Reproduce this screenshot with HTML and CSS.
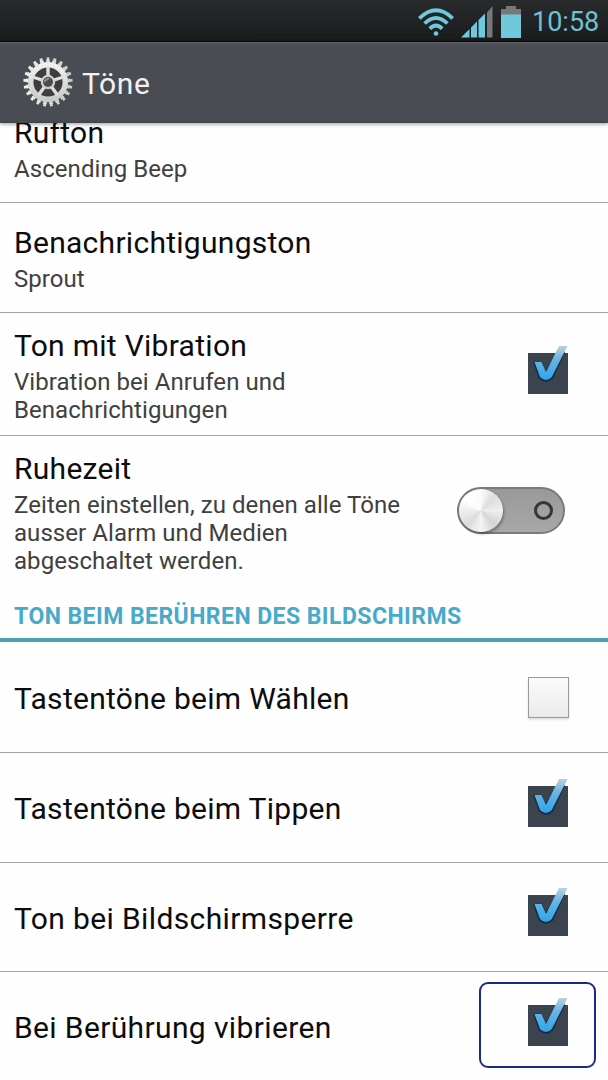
FILE: index.html
```html
<!DOCTYPE html>
<html lang="de">
<head>
<meta charset="utf-8">
<title>Töne</title>
<link rel="stylesheet" href="styles.css">
</head>
<body>
<svg class="defs" aria-hidden="true">
  <defs>
    <linearGradient id="tick" x1="0" y1="0" x2="0" y2="1">
      <stop offset="0" stop-color="#bcd0dc"/>
      <stop offset=".4" stop-color="#66b5e4"/>
      <stop offset="1" stop-color="#2fa4ea"/>
    </linearGradient>
    <linearGradient id="metal" x1="0" y1="0" x2="0" y2="1">
      <stop offset="0" stop-color="#f0f0ee"/>
      <stop offset="1" stop-color="#cbccca"/>
    </linearGradient>
    <symbol id="checked" viewBox="0 0 44 50">
      <rect x="1" y="8" width="40" height="41" fill="#3a434e"/>
      <path d="M7 17.500H14.500L18.500 27L30 8H37L25.500 33Q19.500 39 12.500 33z" fill="#192c3f" stroke="#192c3f" stroke-width="1.500"/>
      <path d="M7.500 17H14.500L19 27L32 1H40.500L24.800 32Q19 38 13 32z" fill="url(#tick)"/>
    </symbol>
  </defs>
</svg>
<div class="statusbar">
  <svg class="wifi" viewBox="0 0 36 29" width="36" height="29">
    <g fill="none" stroke="#6fc8dc" stroke-width="3.800">
      <path d="M1.300 10.300Q18-5.800 34.700 10.300"/>
      <path d="M6.600 15.500Q18 4.300 29.400 15.500"/>
      <path d="M11.800 20.700Q18 14.300 24.200 20.700"/>
    </g>
    <circle cx="18" cy="25.500" r="2.300" fill="#6fc8dc"/>
  </svg>
  <svg class="signal" viewBox="0 0 32 32" width="32" height="32">
    <path d="M26 6.500L31.500 0v31.500H26z" fill="#77787a"/>
    <path d="M0 31.500L8.500 23v8.500zM10 21.500l6-6v16h-6zM17.500 14L24 7.500v24h-6.500z" fill="#6fc8dc"/>
  </svg>
  <svg class="battery" viewBox="0 0 20 32" width="20" height="32">
    <path d="M5 0h10v3h5v6H0V3h5z" fill="#77787a"/>
    <path d="M0 8.500h20V32H0z" fill="#6fc8dc"/>
  </svg>
  <span class="clock">10:58</span>
</div>
<header class="appbar">
  <svg class="gear" viewBox="-26 -26 52 52" width="52" height="52">
    <circle r="16" fill="#3d3e42"/>
    <g fill="none" stroke="url(#metal)" transform="rotate(-90)">
      <circle r="23.200" stroke-width="2.800" pathLength="210" stroke-dasharray="4 6" stroke-dashoffset="2"/>
      <circle r="21" stroke-width="2.600" pathLength="210" stroke-dasharray="6 4" stroke-dashoffset="3"/>
    </g>
    <circle r="17.300" fill="none" stroke="url(#metal)" stroke-width="5.400"/>
    <path d="M0 0V-16M0 0L15.200-5M0 0L9.400 13M0 0L-9.400 13M0 0L-15.200-5" stroke="#dededc" stroke-width="3.400"/>
    <circle r="7.200" fill="#d0d0ce"/>
    <circle r="5" fill="#4a4b4e"/>
    <path d="M-4 1A4 4 0 0 1 2-3.500z" fill="#85878a"/>
  </svg>
  <h1>Töne</h1>
</header>
<main class="list">
  <div class="row clipped"><div class="label"><h2>Rufton</h2><p>Ascending Beep</p></div></div>
  <div class="row"><div class="label"><h2>Benachrichtigungston</h2><p>Sprout</p></div></div>
  <div class="row tall"><div class="label"><h2>Ton mit Vibration</h2><p>Vibration bei Anrufen und<br>Benachrichtigungen</p></div><svg class="check"><use href="#checked"/></svg></div>
  <div class="row quiet"><div class="label"><h2>Ruhezeit</h2><p>Zeiten einstellen, zu denen alle Töne<br>ausser Alarm und Medien<br>abgeschaltet werden.</p></div><div class="switch"><span class="knob"></span><span class="off"></span></div></div>
  <h3 class="section">TON BEIM BERÜHREN DES BILDSCHIRMS</h3>
  <div class="row single first"><h2>Tastentöne beim Wählen</h2><span class="unchecked"></span></div>
  <div class="row single"><h2>Tastentöne beim Tippen</h2><svg class="check"><use href="#checked"/></svg></div>
  <div class="row single third"><h2>Ton bei Bildschirmsperre</h2><svg class="check"><use href="#checked"/></svg></div>
  <div class="row single last"><h2>Bei Berührung vibrieren</h2><div class="focus"><svg class="check"><use href="#checked"/></svg></div></div>
</main>
</body>
</html>
```
FILE: styles.css
```css
* { box-sizing: border-box; }
body { margin: 0; width: 608px; height: 1080px; overflow: hidden; display: flex; flex-direction: column; background: #fefefe; color: #0c0c0c; font-family: Roboto, "Noto Sans", sans-serif; }
h1, h2, h3, p { margin: 0; font-weight: 400; white-space: nowrap; }
.defs { position: absolute; width: 0; height: 0; }
.statusbar { flex: none; height: 42px; display: flex; align-items: flex-start; padding: 6px 10px 0 0; justify-content: flex-end; background: linear-gradient(#292a2b, #1b1c1d 39px, #0b0b0b 42px); }
.wifi { margin: 2px 7px 0 0; }
.signal { margin-right: 8px; }
.battery { margin-right: 11px; }
.clock { width: 66px; font-size: 27px; line-height: 32px; color: #6fc0d3; white-space: nowrap; }
.appbar { flex: none; height: 81px; display: flex; align-items: center; padding: 0 0 2px 22px; background: linear-gradient(#5c5f66, #4a4c53 3px, #494c53 78px, #42464d); box-shadow: 0 1px 4px rgba(0,0,0,.4); z-index: 1; }
.gear { margin-right: 8px; }
h1 { font-size: 30px; line-height: 36px; color: #f2f2f2; letter-spacing: .6px; padding-top: 5px; }
.list { flex: none; }
.row { height: 110px; display: flex; align-items: flex-start; justify-content: space-between; padding: 22px 37px 0 14px; border-bottom: 1px solid #a4a4a4; }
h2 { font-size: 30px; line-height: 36px; letter-spacing: .28px; }
p { margin-top: 4px; font-size: 24px; line-height: 28px; color: #404040; letter-spacing: .06px; }
.clipped { margin-top: -30px; }
.tall { height: 123px; padding-top: 15px; }
.quiet { height: 154px; padding: 15px 43px 0 14px; border: 0; }
.check { flex: none; width: 44px; height: 50px; }
.tall .check { margin-top: 17px; }
.switch { flex: none; width: 108px; height: 47px; margin-top: 36px; border: 2px solid #747d84; border-radius: 24px; background: linear-gradient(#999, #a8a8a8); display: flex; align-items: center; justify-content: space-between; padding-right: 10px; }
.knob { width: 44px; height: 43px; border-radius: 50%; background: conic-gradient(#fafafa, #ddd 12%, #eee 25%, #d4d4d4 38%, #f5f5f5 50%, #dcdcdc 62%, #eee 75%, #fff 85%, #fafafa); box-shadow: 1px 2px 3px rgba(0,0,0,.35); }
.off { width: 19px; height: 19px; border: 3px solid #393533; border-radius: 50%; }
.section { height: 52px; padding: 12px 0 0 14px; font-size: 23px; line-height: 30px; font-weight: 700; letter-spacing: .44px; color: #48a9ca; border-bottom: 4px solid #4ca0b0; }
.single { padding-top: 0; align-items: center; }
.first { height: 111px; }
.third { height: 109px; }
.third h2 { letter-spacing: .37px; }
.last { height: 110px; padding-right: 12px; border: 0; }
.single .check { margin-bottom: 10px; }
.single h2 { padding-top: 3px; }
.last h2 { padding-top: 1px; letter-spacing: .37px; }
.unchecked { width: 41px; height: 41px; margin: 0 2px 0 0; border: 1.500px solid #999; background: linear-gradient(#fbfbfc, #e8eaec); box-shadow: 0 2px 2px #e2e2e2; }
.focus { width: 117px; height: 86px; border: 2px solid #1c2a86; border-radius: 9px; padding: 13px 0 0 46px; margin-bottom: 4px; }
.focus .check { display: block; margin: 0; }
```
